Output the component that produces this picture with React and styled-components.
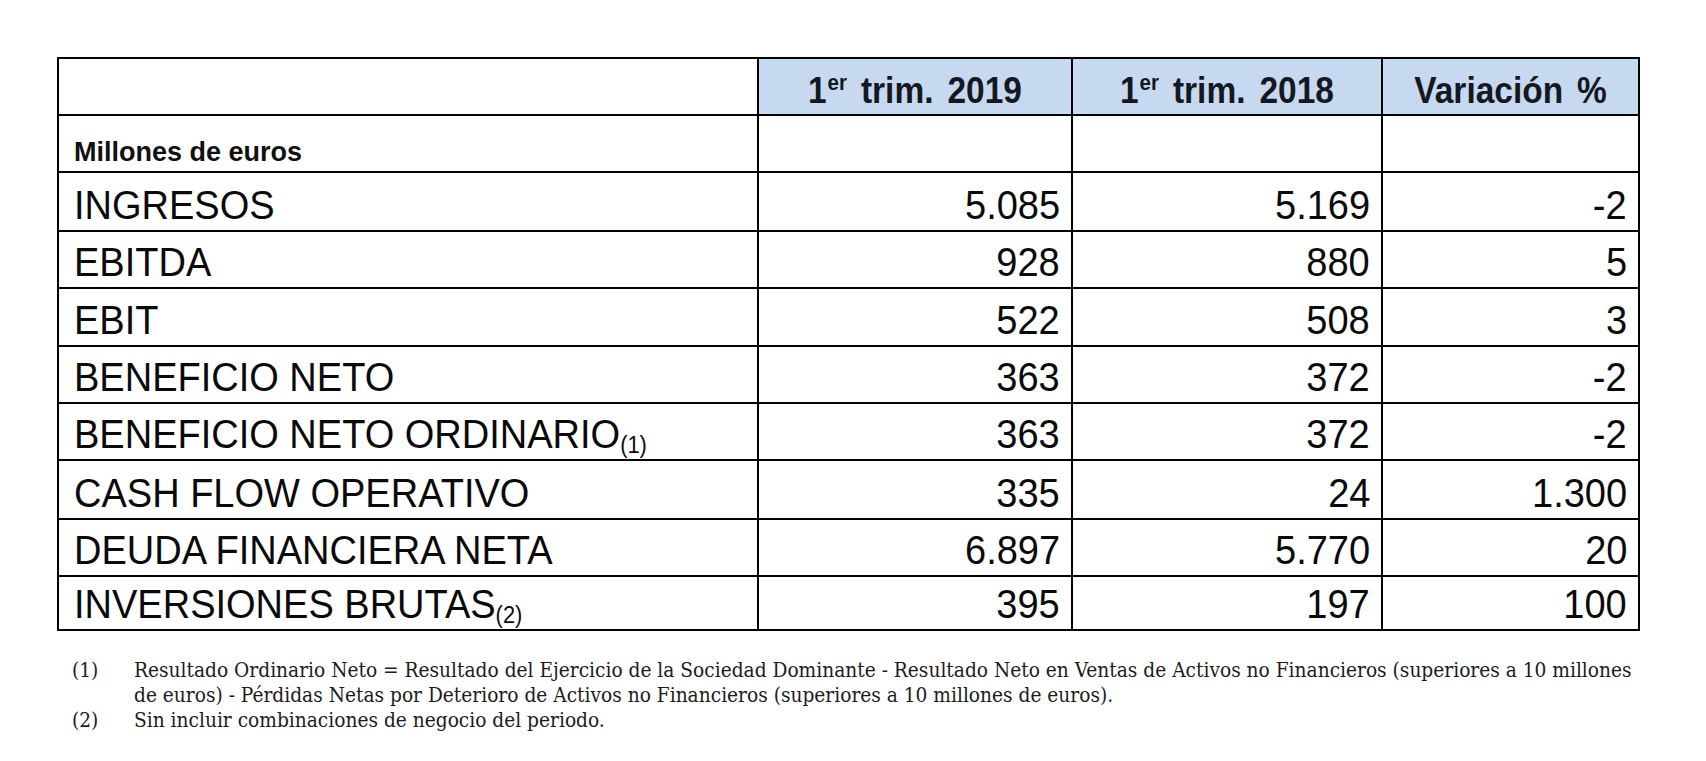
import React from "react";
import styled, { createGlobalStyle } from "styled-components";

const Global = createGlobalStyle`
  html, body { margin: 0; padding: 0; background: #ffffff; }
  body { font-family: "Liberation Sans", Arial, sans-serif; color: #000; }
`;

const Page = styled.div`
  padding: 57px 0 0 57px;
  width: 1706px;
  height: 761px;
  box-sizing: border-box;
  overflow: hidden;
`;

const Table = styled.table`
  border-collapse: collapse;
  table-layout: fixed;
  width: 1582px;
  font-family: "Liberation Sans", Arial, sans-serif;
`;

const Row = styled.tr`
  height: ${(p) => p.$h}px;
`;

const Cell = styled.td`
  border: 2px solid #000;
  padding: 0 ${(p) => (p.$num ? "11px" : "0")} ${(p) => p.$pb || 2}px ${(p) => (p.$num ? "0" : "15px")};
  text-align: ${(p) => (p.$num ? "right" : "left")};
  vertical-align: bottom;
  background: ${(p) => (p.$head ? "#c6d9f0" : "#ffffff")};
  white-space: nowrap;
  overflow: visible;
`;

const HeadCell = styled(Cell)`
  text-align: center;
  padding: 0 0 3px 0;
`;

const Squeeze = styled.span`
  display: inline-block;
  transform: scaleX(0.95);
  transform-origin: ${(p) => (p.$origin || "left")} center;
  line-height: 1.15;
`;

const BigText = styled(Squeeze)`
  font-size: 40px;
  color: #0a0a0a;
`;

const HeadText = styled(Squeeze)`
  font-size: 36px;
  font-weight: bold;
  word-spacing: 5px;
  transform: scaleX(0.93);
  transform-origin: center center;
  color: #141820;
`;

const Sup = styled.sup`
  font-size: 22px;
  vertical-align: 13px;
  line-height: 0;
  margin-left: 1px;
`;

const Note = styled.span`
  font-size: 23px;
  vertical-align: -5px;
  line-height: 0;
`;

const Units = styled.span`
  font-size: 27px;
  font-weight: bold;
  line-height: 1.15;
  display: inline-block;
  color: #111;
`;

const Footnotes = styled.div`
  margin-top: 27px;
  display: grid;
  grid-template-columns: 62px auto;
  padding-left: 15px;
  font-family: "DejaVu Serif", "Liberation Serif", serif;
  font-stretch: condensed;
  font-size: 20.7px;
  line-height: 25px;
  color: #1c1c1c;
`;

const NoteMark = styled.div`
  white-space: nowrap;
`;

const NoteText = styled.div`
  white-space: nowrap;
`;

const NoteLine = styled.div``;

const rows = [
  { label: "INGRESOS", a: "5.085", b: "5.169", c: "-2", h: 59 },
  { label: "EBITDA", a: "928", b: "880", c: "5", h: 57 },
  { label: "EBIT", a: "522", b: "508", c: "3", h: 58 },
  { label: "BENEFICIO NETO", a: "363", b: "372", c: "-2", h: 57 },
  { label: "BENEFICIO NETO ORDINARIO", note: "(1)", a: "363", b: "372", c: "-2", h: 57 },
  { label: "CASH FLOW OPERATIVO", a: "335", b: "24", c: "1.300", h: 59 },
  { label: "DEUDA FINANCIERA NETA", a: "6.897", b: "5.770", c: "20", h: 57 },
  { label: "INVERSIONES BRUTAS", note: "(2)", a: "395", b: "197", c: "100", h: 54 },
];

const heads = ["2019", "2018"];

export default function App() {
  return (
    <Page>
      <Global />
      <Table>
        <colgroup>
          <col style={{ width: 700 }} />
          <col style={{ width: 314 }} />
          <col style={{ width: 310 }} />
          <col style={{ width: 257 }} />
        </colgroup>
        <tbody>
          <Row $h={57}>
            <Cell />
            {heads.map((y) => (
              <HeadCell key={y} $head>
                <HeadText>
                  1<Sup>er</Sup> trim. {y}
                </HeadText>
              </HeadCell>
            ))}
            <HeadCell $head>
              <HeadText>Variación %</HeadText>
            </HeadCell>
          </Row>
          <Row $h={57}>
            <Cell $pb={3}>
              <Units>Millones de euros</Units>
            </Cell>
            <Cell />
            <Cell />
            <Cell />
          </Row>
          {rows.map((r) => (
            <Row key={r.label} $h={r.h}>
              <Cell>
                <BigText>
                  {r.label}
                  {r.note && <Note>{r.note}</Note>}
                </BigText>
              </Cell>
              <Cell $num>
                <BigText $origin="right">{r.a}</BigText>
              </Cell>
              <Cell $num>
                <BigText $origin="right">{r.b}</BigText>
              </Cell>
              <Cell $num>
                <BigText $origin="right">{r.c}</BigText>
              </Cell>
            </Row>
          ))}
        </tbody>
      </Table>
      <Footnotes>
        <NoteMark>(1)</NoteMark>
        <NoteText>
          <NoteLine>
            Resultado Ordinario Neto = Resultado del Ejercicio de la Sociedad Dominante - Resultado Neto en Ventas de Activos no Financieros (superiores a 10 millones
          </NoteLine>
          <NoteLine>
            de euros) - Pérdidas Netas por Deterioro de Activos no Financieros (superiores a 10 millones de euros).
          </NoteLine>
        </NoteText>
        <NoteMark>(2)</NoteMark>
        <NoteText>
          <NoteLine>Sin incluir combinaciones de negocio del periodo.</NoteLine>
        </NoteText>
      </Footnotes>
    </Page>
  );
}
